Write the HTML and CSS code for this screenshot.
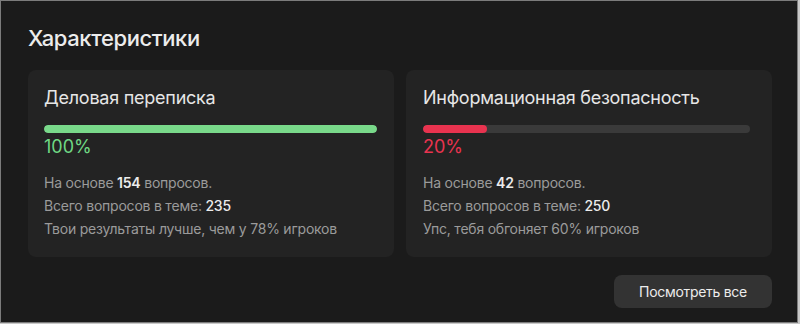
FILE: index.html
```html
<!DOCTYPE html>
<html lang="ru">
<head>
<meta charset="utf-8">
<link rel="stylesheet" href="styles.css">
</head>
<body>
<section class="panel">
  <h2 class="panel-title">Характеристики</h2>
  <div class="cards">
    <article class="card">
      <h3 class="card-title">Деловая переписка</h3>
      <div class="bar"><div class="bar-fill good" style="width:100%"></div></div>
      <div class="percent good-text">100%</div>
      <ul class="stats">
        <li>На основе <b>154</b> вопросов.</li>
        <li>Всего вопросов в теме: <b class="plain">235</b></li>
        <li>Твои результаты лучше, чем у 78% игроков</li>
      </ul>
    </article>
    <article class="card card-wide-pad">
      <h3 class="card-title">Информационная безопасность</h3>
      <div class="bar"><div class="bar-fill bad" style="width:19.5%"></div></div>
      <div class="percent bad-text">20%</div>
      <ul class="stats">
        <li>На основе <b>42</b> вопросов.</li>
        <li>Всего вопросов в теме: <b class="plain">250</b></li>
        <li>Упс, тебя обгоняет 60% игроков</li>
      </ul>
    </article>
  </div>
  <div class="actions">
    <button class="btn">Посмотреть все</button>
  </div>
</section>
</body>
</html>
```

FILE: styles.css
```css
html, body {
  margin: 0;
  padding: 0;
  background: #c8c8c8;
}
body {
  font-family: Inter, "Noto Sans", "Liberation Sans", sans-serif;
  width: 800px;
  height: 324px;
}
.panel {
  box-sizing: border-box;
  width: 798px;
  height: 323px;
  border: 1px solid #7c7c7c;
  background: #1b1b1b;
  padding: 23px 25px 15px 27px;
  display: flex;
  flex-direction: column;
}
.panel-title {
  margin: 0;
  font-size: 22px;
  line-height: 28px;
  font-weight: 500;
  color: #ececec;
  letter-spacing: -0.4px;
}
.cards {
  margin-top: 18px;
  display: grid;
  grid-template-columns: 1fr 1fr;
  gap: 12px;
}
.card {
  background: #232323;
  border-radius: 8px;
  padding: 16px 17px 17px 16px;
}
.card-wide-pad {
  padding-right: 22px;
  padding-left: 17px;
}
.card-title {
  margin: 0;
  font-size: 18px;
  line-height: 24px;
  font-weight: 400;
  color: #e6e6e6;
  letter-spacing: -0.25px;
}
.bar {
  margin-top: 15px;
  height: 8px;
  border-radius: 4px;
  background: #3a3a3a;
  overflow: hidden;
}
.bar-fill {
  height: 100%;
  border-radius: 4px;
}
.good { background: #79d98a; }
.bad { background: #e8334f; }
.percent {
  margin-top: 2px;
  font-size: 18px;
  line-height: 24px;
}
.good-text { color: #6fd884; }
.bad-text { color: #e8334f; }
.stats {
  list-style: none;
  margin: 12px 0 0 0;
  padding: 0;
  font-size: 14px;
  line-height: 23px;
  color: #9b9b9b;
  letter-spacing: -0.22px;
}
.stats b {
  color: #ececec;
  font-weight: 600;
}
.stats b.plain {
  font-weight: 500;
}
.actions {
  margin-top: 18px;
  display: flex;
  justify-content: flex-end;
}
.btn {
  width: 158px;
  height: 33px;
  border: none;
  border-radius: 8px;
  background: #333333;
  color: #ececec;
  font-family: inherit;
  font-size: 14px;
  font-weight: 400;
  letter-spacing: -0.3px;
  padding: 0;
}
```
